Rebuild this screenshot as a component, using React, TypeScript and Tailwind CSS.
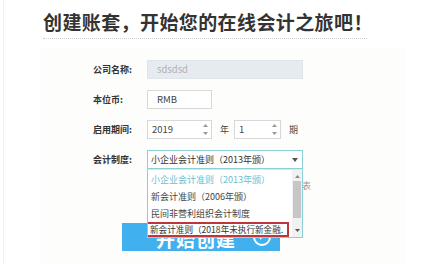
import React from "react";

const font = { fontFamily: '"Noto Sans CJK SC", "Noto Sans", sans-serif' };

function Spinner() {
  return (
    <div className="absolute right-[3px] top-0 bottom-0 flex flex-col justify-center gap-[5px]">
      <svg width="5" height="3" viewBox="0 0 5 3"><path d="M0 3 L2.5 0 L5 3 Z" fill="#999" /></svg>
      <svg width="5" height="3" viewBox="0 0 5 3"><path d="M0 0 L2.5 3 L5 0 Z" fill="#999" /></svg>
    </div>
  );
}

export default function App() {
  return (
    <div className="relative w-[431px] h-[264px] overflow-hidden bg-white" style={font}>
      <div className="absolute left-[3px] top-0 bottom-0 w-px bg-[#f0f0f0]" />
      <div className="pl-[43px] pt-[9px]">
        <div className="w-[324px] border-b border-dotted border-[#cfcfcf] pb-[4px]">
          <h1 className="text-[19px] leading-[25px] font-bold text-[#333] tracking-[0.4px] whitespace-nowrap">
            创建账套，开始您的在线会计之旅吧！
          </h1>
        </div>
      </div>
      <div className="ml-[40px] mt-[8px] w-[366px] h-[230px] bg-[#fdfdfb] pt-[13px] pl-[53px] relative">
        <div className="flex flex-col gap-[11px]">
          <div className="flex items-center h-[19px]">
            <span className="w-[54px] text-[9px] font-bold text-[#333]">公司名称:</span>
            <div className="w-[156px] h-[19px] bg-[#e6ebf1] border border-[#e0e5ea] flex items-center pl-[9px] text-[9.5px] text-[#b2b2b2]">sdsdsd</div>
          </div>
          <div className="flex items-center h-[19px]">
            <span className="w-[54px] text-[9px] font-bold text-[#333]">本位币:</span>
            <div className="w-[65px] h-[19px] bg-white border border-[#d8d8d8] flex items-center pl-[9px] text-[9.5px] text-[#444]">RMB</div>
          </div>
          <div className="flex items-center h-[19px]">
            <span className="w-[54px] text-[9px] font-bold text-[#333]">启用期间:</span>
            <div className="relative w-[65px] h-[19px] bg-white border border-[#d8d8d8] flex items-center pl-[4px] text-[9.5px] text-[#444]">
              2019
              <Spinner />
            </div>
            <span className="ml-[8px] mr-[5px] text-[9px] text-[#444]">年</span>
            <div className="relative w-[47px] h-[19px] bg-white border border-[#d8d8d8] flex items-center pl-[4px] text-[9.5px] text-[#444]">
              1
              <Spinner />
            </div>
            <span className="ml-[8px] text-[9px] text-[#444]">期</span>
          </div>
          <div className="flex items-center h-[19px]">
            <span className="w-[54px] text-[9px] font-bold text-[#333]">会计制度:</span>
            <div className="relative w-[156px] h-[19px] bg-white border border-[#8ccfd6] flex items-center pl-[3px] text-[9px] text-[#333] whitespace-nowrap">
              小企业会计准则（2013年颁）
              <svg className="absolute right-[4px] top-[7px]" width="6" height="4" viewBox="0 0 6 4"><path d="M0 0 L3 4 L6 0 Z" fill="#555" /></svg>
            </div>
          </div>
          <div className="flex items-center justify-end h-[14px] -mt-[1px] w-[218px]">
            <span className="text-[9px] text-[#999] whitespace-nowrap">
              <span className="inline-block w-[8px] h-[8px] border border-[#bbb] mr-[4px] align-middle" />
              同时生成现金流量表及利润表
            </span>
          </div>
        </div>
        <div className="ml-[29px] mt-[30px] w-[158px] h-[28px] bg-[#40b1ee] flex items-center justify-center relative">
          <span className="text-[19px] leading-[20px] pt-[3px] text-white font-semibold tracking-[1px] ml-[-10px]">开始创建</span>
          <div className="absolute right-[9px] top-[5px] w-[18px] h-[18px] rounded-full border-[2px] border-white flex items-center justify-center">
            <svg width="8" height="8" viewBox="0 0 8 8"><path d="M2 6 L6 2 M3 2 L6 2 L6 5" stroke="white" strokeWidth="1.6" fill="none" /></svg>
          </div>
        </div>
        {/* dropdown list */}
        <div className="absolute left-[107px] top-[122px] w-[156px] h-[69px] bg-white border border-[#8ccfd6] border-t-[#d8e8ea] flex">
          <div className="flex-1 flex flex-col pt-[1px] whitespace-nowrap overflow-hidden">
            <div className="h-[17px] flex items-center pl-[3px] text-[9px] text-[#6cc0d0]">小企业会计准则（2013年颁）</div>
            <div className="h-[17px] flex items-center pl-[3px] text-[9px] text-[#444]">新会计准则（2006年颁）</div>
            <div className="h-[17px] flex items-center pl-[3px] text-[9px] text-[#444]">民间非营利组织会计制度</div>
            <div className="h-[15px] flex items-center pl-[3px] ml-[-3px] w-[144px] overflow-hidden text-[8.6px] text-[#333] border-[2px] border-[#c0353a]">新会计准则（2018年未执行新金融.</div>
          </div>
          <div className="w-[10px] bg-[#f1f1f1] flex flex-col items-center">
            <svg className="mt-[5px]" width="5" height="3" viewBox="0 0 5 3"><path d="M0 3 L2.5 0 L5 3 Z" fill="#888" /></svg>
            <div className="mt-[3px] w-[8px] h-[37px] bg-[#c6c6c6]" />
            <div className="flex-1" />
            <svg className="mb-[5px]" width="5" height="3" viewBox="0 0 5 3"><path d="M0 0 L2.5 3 L5 0 Z" fill="#555" /></svg>
          </div>
        </div>
      </div>
    </div>
  );
}
